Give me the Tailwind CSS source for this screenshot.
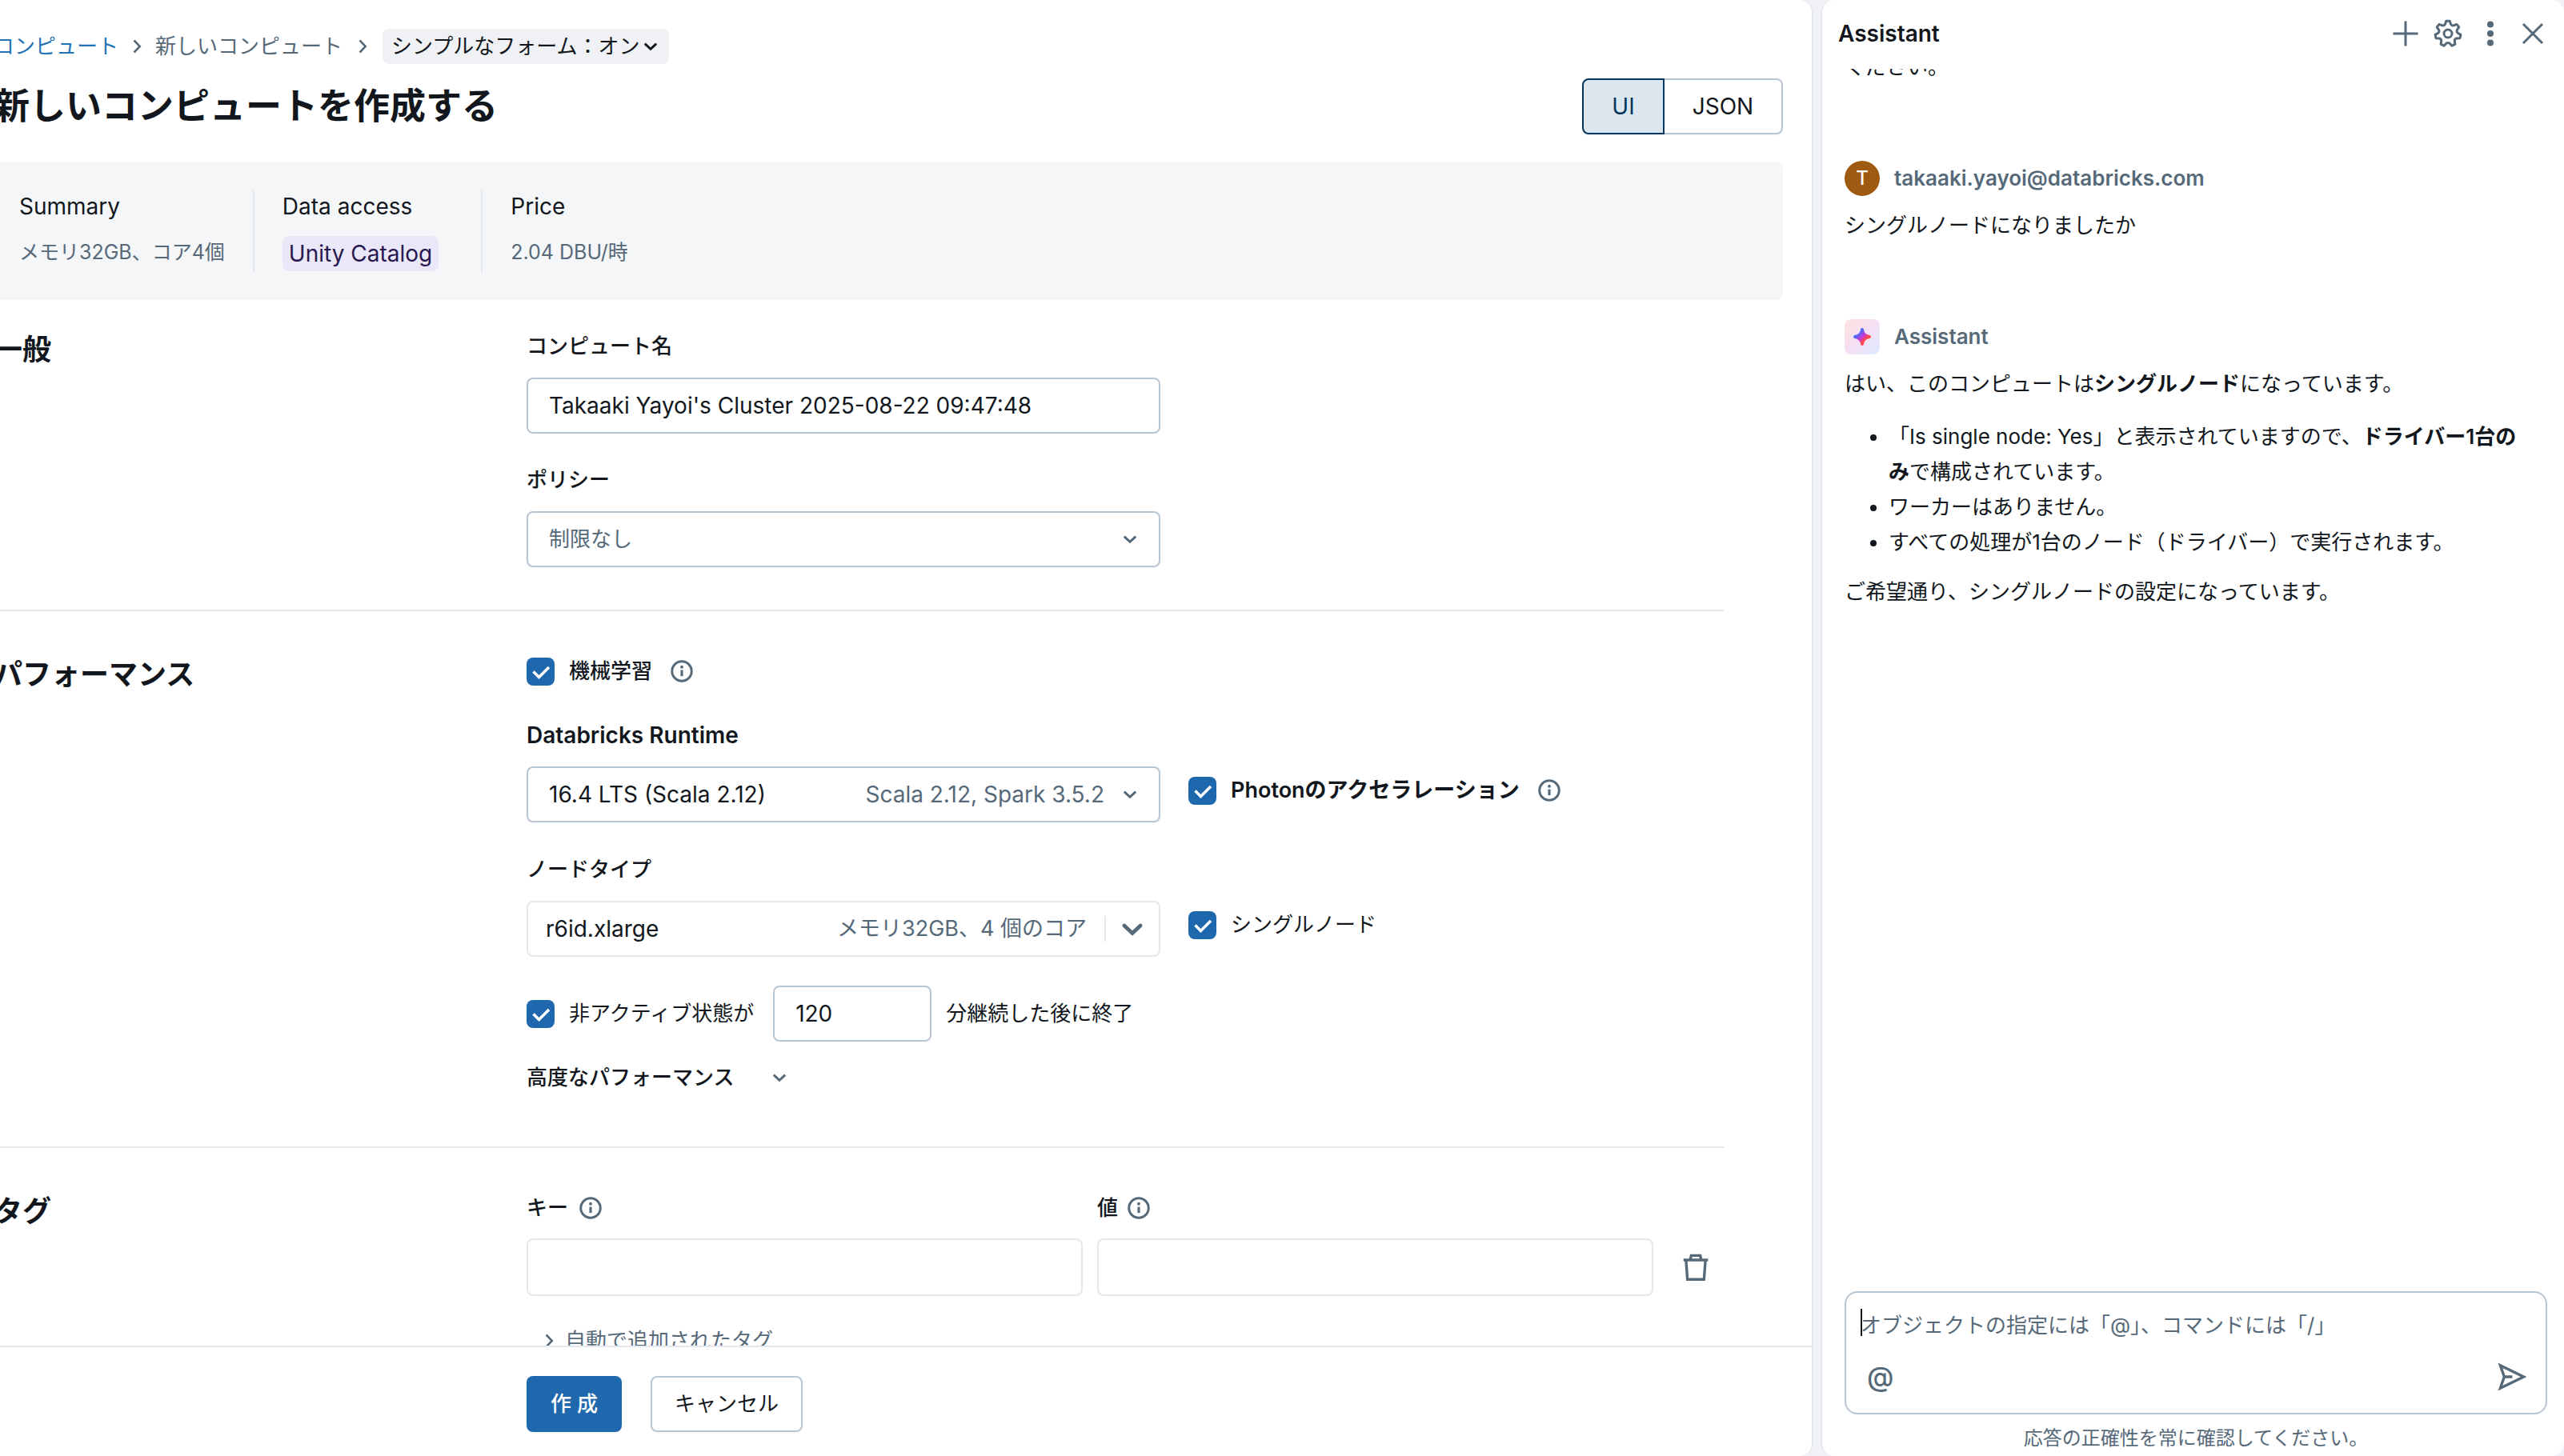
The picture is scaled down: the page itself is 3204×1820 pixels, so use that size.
<!DOCTYPE html>
<html lang="ja">
<head>
  <meta charset="UTF-8">
  <meta name="viewport" content="width=device-width, initial-scale=1.0">
  <title>新しいコンピュートを作成する</title>
  <script src="https://cdn.jsdelivr.net/npm/@tailwindcss/browser@4"></script>
  <style>
    html, body { height: 100%; margin: 0; }
    body { font-family: Inter, 'Noto Sans CJK JP', sans-serif; }
  </style>
</head>
<body class="h-full overflow-hidden bg-[#f0f2f5] text-[26px] leading-[40px] text-[#11171c]">
  <!-- Shared icons -->
  <svg class="hidden">
    <symbol id="i-down" viewBox="0 0 16 16"><path d="M3.200 5.700 8 10.200 12.800 5.700" fill="none" stroke="currentColor" stroke-width="2"/></symbol>
    <symbol id="i-down-bold" viewBox="0 0 16 16"><path d="M3.500 6.200 8 10.400 12.500 6.200" fill="none" stroke="currentColor" stroke-width="2.100" stroke-linecap="round"/></symbol>
    <symbol id="i-right" viewBox="0 0 16 16"><path d="M5.700 3 10.500 8 5.700 13" fill="none" stroke="currentColor" stroke-width="1.700"/></symbol>
    <symbol id="i-info" viewBox="0 0 16 16"><circle cx="8" cy="8" r="7" fill="none" stroke="currentColor" stroke-width="1.700"/><path d="M7.100 7.200h1.800v4.300h-1.800z" fill="currentColor"/><circle cx="8" cy="5" r="1.100" fill="currentColor"/></symbol>
    <symbol id="i-check" viewBox="0 0 35 35"><path d="M8.500 17.500 15.500 24.500 28 12" fill="none" stroke="#fff" stroke-width="3.500"/></symbol>
  </svg>

  <div class="flex h-full gap-[9px]">
    <!-- Form panel -->
    <main class="flex flex-1 flex-col overflow-hidden rounded-r-2xl border-r-2 border-[#e4e8ee] bg-white">
      <div class="-ml-2 flex-1 overflow-hidden pr-9">
        <!-- Breadcrumb -->
        <nav class="mt-9 flex h-[44px] items-center gap-2 text-[#566979]">
          <a href="#" class="whitespace-nowrap text-[#2272b4]">コンピュート</a>
          <svg class="mx-[3px] size-6"><use href="#i-right"/></svg>
          <a href="#" class="whitespace-nowrap">新しいコンピュート</a>
          <svg class="mx-[5px] size-6"><use href="#i-right"/></svg>
          <button class="flex h-[44px] items-center gap-0.5 rounded-lg bg-[#f0f1f4] px-[11px] text-[#11171c]">シンプルなフォーム：オン<svg class="size-6"><use href="#i-down"/></svg></button>
        </nav>

        <!-- Title -->
        <div class="mt-[18px] flex items-center justify-between">
          <h1 class="text-[45px] leading-[56px] font-semibold">新しいコンピュートを作成する</h1>
          <div class="flex h-[70px] rounded-lg text-[28px] shadow-xs">
            <button class="w-[103px] rounded-l-lg border-2 border-[#04355d] bg-[#dbe6ef] text-[#04355d]">UI</button>
            <button class="w-[148px] rounded-r-lg border-2 border-l-0 border-[#b8c6d4]">JSON</button>
          </div>
        </div>

        <!-- Summary -->
        <div class="mt-[35px] flex h-[172px] items-center rounded-lg bg-[#f5f6f8] pl-8 text-[28px]">
          <div class="h-[102px] border-r-2 border-[#e4e8ee] pr-[35px]">
            <p>Summary</p>
            <p class="mt-[17px] text-[25px] text-[#566979]">メモリ32GB、コア4個</p>
          </div>
          <div class="h-[102px] border-r-2 border-[#e4e8ee] pr-[53px] pl-[35px]">
            <p>Data access</p>
            <p class="mt-[17px] h-[44px] rounded-lg bg-[#eae7f8] px-2 leading-[44px] text-[#28184f]">Unity Catalog</p>
          </div>
          <div class="h-[102px] pl-[35px]">
            <p>Price</p>
            <p class="mt-[17px] text-[25px] text-[#566979]">2.04 DBU/時</p>
          </div>
        </div>

        <div class="mr-[74px]">
          <!-- General -->
          <section class="flex border-b-2 border-[#e4e8ee] pt-[38px] pb-[53px]">
            <h2 class="w-[666px] text-[36px] leading-[48px] font-semibold">一般</h2>
            <div class="w-[792px]">
              <label for="name" class="block font-medium">コンピュート名</label>
              <input id="name" type="text" value="Takaaki Yayoi's Cluster 2025-08-22 09:47:48" class="mt-[19px] block h-[70px] w-full rounded-lg border-2 border-[#b8c6d4] px-[26px] text-[28px]">
              <label for="policy" class="mt-[38px] block font-medium">ポリシー</label>
              <div class="relative mt-[19px]">
                <select id="policy" class="block h-[70px] w-full appearance-none rounded-lg border-2 border-[#b8c6d4] px-[26px] text-[#566979] shadow-xs"><option>制限なし</option></select>
                <svg class="pointer-events-none absolute top-[23px] right-[26px] size-6 text-[#566979]"><use href="#i-down"/></svg>
              </div>
            </div>
          </section>

          <!-- Performance -->
          <section class="flex border-b-2 border-[#e4e8ee] pt-[55px] pb-[66px]">
            <h2 class="w-[666px] text-[36px] leading-[48px] font-semibold">パフォーマンス</h2>
            <div class="flex-1">
              <div class="flex items-center">
                <span class="relative flex size-[35px]">
                  <input id="ml" type="checkbox" checked class="size-full appearance-none rounded-lg bg-[#2068ad]">
                  <svg class="pointer-events-none absolute inset-0 size-full"><use href="#i-check"/></svg>
                </span>
                <label for="ml" class="ml-[18px] font-medium">機械学習</label>
                <svg class="ml-[23px] size-7 text-[#566979]"><use href="#i-info"/></svg>
              </div>

              <label for="runtime" class="mt-10 block text-[28px] font-semibold">Databricks Runtime</label>
              <div class="mt-[19px] flex items-start">
                <button id="runtime" class="flex h-[70px] w-[792px] items-center rounded-lg border-2 border-[#b8c6d4] pr-6 pl-[26px] text-[28px] shadow-xs">
                  <span>16.4 LTS (Scala 2.12)</span>
                  <span class="ml-auto text-[#566979]">Scala 2.12, Spark 3.5.2</span>
                  <svg class="ml-5 size-6 text-[#566979]"><use href="#i-down"/></svg>
                </button>
                <div class="mt-2.5 ml-[35px] flex items-center">
                  <span class="relative flex size-[35px]">
                    <input id="photon" type="checkbox" checked class="size-full appearance-none rounded-lg bg-[#2068ad]">
                    <svg class="pointer-events-none absolute inset-0 size-full"><use href="#i-check"/></svg>
                  </span>
                  <label for="photon" class="ml-[18px] text-[27px] font-semibold">Photonのアクセラレーション</label>
                  <svg class="ml-[23px] size-7 text-[#566979]"><use href="#i-info"/></svg>
                </div>
              </div>

              <label for="node" class="mt-[39px] block font-medium">ノードタイプ</label>
              <div class="mt-[19px] flex items-start">
                <button id="node" class="flex h-[70px] w-[792px] items-center rounded-lg border-2 border-[#e4e8ee] pr-[15px] pl-[22px]">
                  <span class="text-[28px]">r6id.xlarge</span>
                  <span class="ml-auto text-[27px] text-[#566979]">メモリ32GB、4 個のコア</span>
                  <span class="ml-[22px] h-8 border-l-2 border-[#e4e8ee]"></span>
                  <svg class="ml-[15px] size-9 text-[#566979]"><use href="#i-down-bold"/></svg>
                </button>
                <div class="mt-2.5 ml-[35px] flex items-center">
                  <span class="relative flex size-[35px]">
                    <input id="single" type="checkbox" checked class="size-full appearance-none rounded-lg bg-[#2068ad]">
                    <svg class="pointer-events-none absolute inset-0 size-full"><use href="#i-check"/></svg>
                  </span>
                  <label for="single" class="ml-[18px]">シングルノード</label>
                </div>
              </div>

              <div class="mt-9 flex items-center">
                <span class="relative flex size-[35px]">
                  <input id="idle" type="checkbox" checked class="size-full appearance-none rounded-lg bg-[#2068ad]">
                  <svg class="pointer-events-none absolute inset-0 size-full"><use href="#i-check"/></svg>
                </span>
                <label for="idle" class="ml-[18px]">非アクティブ状態が</label>
                <input type="text" value="120" aria-label="分" class="mr-[18px] ml-6 h-[70px] w-[198px] rounded-lg border-2 border-[#b8c6d4] px-[26px] text-[28px]">
                <span>分継続した後に終了</span>
              </div>

              <button class="mt-[25px] flex items-center font-medium">高度なパフォーマンス<svg class="ml-[45px] size-6 text-[#566979]"><use href="#i-down"/></svg></button>
            </div>
          </section>

          <!-- Tags -->
          <section class="flex pt-[55px]">
            <h2 class="w-[666px] text-[36px] leading-[48px] font-semibold">タグ</h2>
            <div class="flex-1">
              <div class="flex items-end gap-[18px]">
                <div class="flex-1">
                  <label for="key" class="flex items-center gap-[14px] font-medium">キー<svg class="size-7 text-[#566979]"><use href="#i-info"/></svg></label>
                  <input id="key" type="text" class="mt-[18px] block h-[72px] w-full rounded-lg border-2 border-[#e4e8ee] px-[26px]">
                </div>
                <div class="flex-1">
                  <label for="value" class="flex items-center gap-3 font-medium">値<svg class="size-7 text-[#566979]"><use href="#i-info"/></svg></label>
                  <input id="value" type="text" class="mt-[18px] block h-[72px] w-full rounded-lg border-2 border-[#e4e8ee] px-[26px]">
                </div>
                <button aria-label="削除" class="flex h-[72px] w-[70px] items-center justify-center text-[#566979]">
                  <svg class="size-9" viewBox="0 0 16 16" fill="none" stroke="currentColor" stroke-width="1.500"><path d="M1.200 4h13.600M4.900 4l.6-2.500h5l.6 2.500M2.600 4l.8 10.800h9.200l.8-10.800"/></svg>
                </button>
              </div>
              <button class="mt-9 ml-4 flex items-center gap-2 text-[#566979]"><svg class="size-6"><use href="#i-right"/></svg>自動で追加されたタグ</button>
            </div>
          </section>
        </div>
      </div>

      <!-- Actions -->
      <footer class="flex h-[138px] shrink-0 gap-9 border-t-2 border-[#e4e8ee] pt-9 pl-[658px]">
        <button class="h-[70px] rounded-lg bg-[#2068ad] px-[30px] font-medium text-white shadow-xs">作 成</button>
        <button class="h-[70px] rounded-lg border-2 border-[#b8c6d4] px-7 shadow-xs">キャンセル</button>
      </footer>
    </main>

    <!-- Assistant panel -->
    <aside class="flex w-[929px] shrink-0 flex-col overflow-hidden rounded-2xl border-l-2 border-[#e4e8ee] bg-white pr-[21px] pl-[28px]">
      <header class="-ml-2 flex h-[84px] shrink-0 items-center gap-[17px]">
        <h2 class="mr-auto text-[28px] font-semibold">Assistant</h2>
        <button aria-label="新規" class="text-[#566979]"><svg class="size-9" viewBox="0 0 36 36" fill="none" stroke="currentColor" stroke-width="3"><path d="M18 2.500v31M2.500 18h31"/></svg></button>
        <button aria-label="設定" class="text-[#566979]"><svg class="size-9" viewBox="0 0 36 36" fill="none" stroke="currentColor" stroke-width="3" stroke-linejoin="round"><circle cx="18" cy="18" r="5"/><path d="M20.200 2.200 21.500 6.200Q23 8.500 25 7.900L29 6.400 31.800 9.900 29.400 13.400Q28.500 16 30.300 17.200L33.900 19.400 33 23.700 28.700 24Q26 25 26.300 27.100L26.900 31.300 22.900 33.200 20 30.100Q18 28.800 16 30.100L13.100 33.200 9.100 31.300 9.700 27.100Q10 25 7.300 24L3 23.700 2.100 19.400 5.700 17.200Q7.500 16 6.600 13.400L4.200 9.900 7 6.400 11 7.900Q13 8.500 14.500 6.200L15.800 2.200Z"/></svg></button>
        <button aria-label="メニュー" class="text-[#566979]"><svg class="size-9" viewBox="0 0 36 36" fill="currentColor"><circle cx="18" cy="6.500" r="4"/><circle cx="18" cy="18" r="4"/><circle cx="18" cy="29.500" r="4"/></svg></button>
        <button aria-label="閉じる" class="text-[#566979]"><svg class="size-9" viewBox="0 0 36 36" fill="none" stroke="currentColor" stroke-width="3"><path d="M6 6l24 24M30 6 6 30"/></svg></button>
      </header>

      <!-- Messages -->
      <div class="mt-0.5 flex flex-1 flex-col overflow-hidden leading-[44px]">
        <p class="-mt-6">ください。</p>
        <div class="mt-[95px] flex items-center gap-[18px] font-semibold text-[#566979]">
          <span class="flex size-[44px] items-center justify-center rounded-full bg-[#9e5a10] text-2xl font-medium text-white">T</span>
          takaaki.yayoi@databricks.com
        </div>
        <p class="mt-[15px]">シングルノードになりましたか</p>
        <div class="mt-[95px] flex items-center gap-[18px] font-semibold text-[#566979]">
          <span class="flex size-[44px] items-center justify-center rounded-lg bg-linear-to-br from-[#ffe3dc] via-[#f5def5] to-[#dcecff]">
            <svg class="size-6" viewBox="0 0 16 16"><defs><linearGradient id="spark" x1="0" y1="0" x2="1" y2="1"><stop offset="0.250" stop-color="#4a6cf5"/><stop offset="0.500" stop-color="#c737d8"/><stop offset="0.700" stop-color="#ff4a4a"/></linearGradient></defs><path d="M8 2Q8.800 7.200 14 8Q8.800 8.800 8 14Q7.200 8.800 2 8Q7.200 7.200 8 2Z" fill="url(#spark)" stroke="url(#spark)" stroke-width="2.600" stroke-linejoin="round"/></svg>
          </span>
          Assistant
        </div>
        <p class="mt-[15px]">はい、このコンピュートは<b class="font-semibold">シングルノード</b>になっています。</p>
        <ul class="mt-[22px] list-disc pr-4 pl-[55px]">
          <li>「Is single node: Yes」と表示されていますので、<b class="font-semibold">ドライバー1台のみ</b>で構成されています。</li>
          <li>ワーカーはありません。</li>
          <li>すべての処理が1台のノード（ドライバー）で実行されます。</li>
        </ul>
        <p class="mt-[18px]">ご希望通り、シングルノードの設定になっています。</p>
      </div>

      <!-- Prompt box -->
      <div class="relative flex h-[154px] shrink-0 flex-col rounded-2xl border-2 border-[#b8c6d4] px-[18px]">
        <span class="absolute top-5 left-[18px] h-[34px] w-0.5 bg-[#11171c]"></span>
        <input type="text" aria-label="メッセージ" placeholder="オブジェクトの指定には「@」、コマンドには「/」" class="mt-[21px] h-[40px] w-full outline-none placeholder:text-[#566979]">
        <div class="mt-6 flex items-center justify-between pl-2 pr-1.5 text-[#566979]">
          <button aria-label="メンション" class="text-[34px] font-medium">@</button>
          <button aria-label="送信"><svg class="size-9" viewBox="0 0 16 16" fill="none" stroke="currentColor" stroke-width="1.500"><path d="M1.500 1.700 14.500 8 1.500 14.300 3.700 8zM3.700 8H8.200"/></svg></button>
        </div>
      </div>
      <p class="mt-2.5 mb-0.5 text-center text-2xl leading-[40px] text-[#566979]">応答の正確性を常に確認してください。</p>
    </aside>
  </div>
</body>
</html>
